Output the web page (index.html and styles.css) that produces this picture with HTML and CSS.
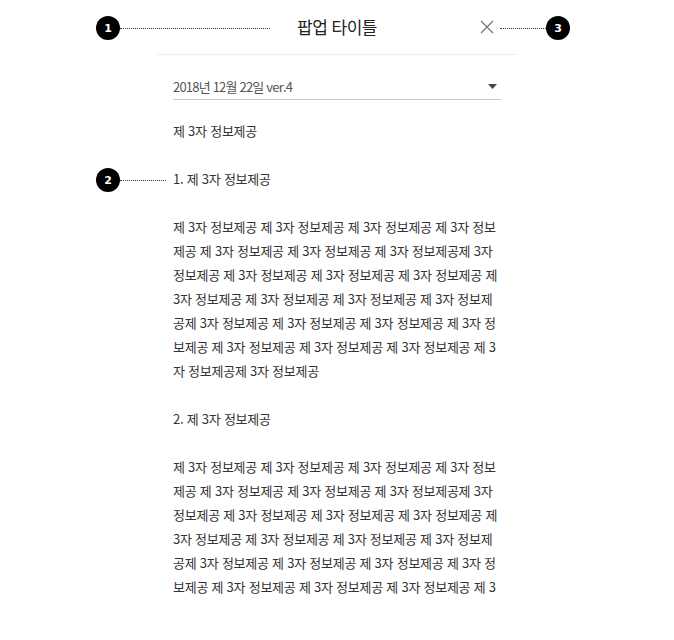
FILE: index.html
```html
<!DOCTYPE html>
<html lang="ko">
<head>
<meta charset="utf-8">
<title>팝업 타이틀</title>
<link rel="stylesheet" href="styles.css">
</head>
<body>
<div class="page">
  <div class="popup">
    <div class="popup-header">
      <span></span>
      <h1 class="popup-title">팝업 타이틀</h1>
      <button class="popup-close" type="button" aria-label="닫기">
        <svg width="14" height="14" viewBox="0 0 14 14"><path d="M1 1L13 13M13 1L1 13" stroke="#777" stroke-width="1.3" fill="none"/></svg>
      </button>
    </div>
    <div class="popup-body">
      <div class="select">
        <span class="select-value">2018년 12월 22일 ver.4</span>
        <svg class="select-arrow" width="9" height="5" viewBox="0 0 9 5"><path d="M0 0H9L4.5 5Z" fill="#444"/></svg>
      </div>
      <div class="content">
        <p>제 3자 정보제공</p>
        <p>1. 제 3자 정보제공</p>
        <p class="para">제 3자 정보제공 제 3자 정보제공 제 3자 정보제공 제 3자 정보제공 제 3자 정보제공 제 3자 정보제공 제 3자 정보제공제 3자 정보제공 제 3자 정보제공 제 3자 정보제공 제 3자 정보제공 제 3자 정보제공 제 3자 정보제공 제 3자 정보제공 제 3자 정보제공제 3자 정보제공 제 3자 정보제공 제 3자 정보제공 제 3자 정보제공 제 3자 정보제공 제 3자 정보제공 제 3자 정보제공 제 3자 정보제공제 3자 정보제공</p>
        <p>2. 제 3자 정보제공</p>
        <p class="para">제 3자 정보제공 제 3자 정보제공 제 3자 정보제공 제 3자 정보제공 제 3자 정보제공 제 3자 정보제공 제 3자 정보제공제 3자 정보제공 제 3자 정보제공 제 3자 정보제공 제 3자 정보제공 제 3자 정보제공 제 3자 정보제공 제 3자 정보제공 제 3자 정보제공제 3자 정보제공 제 3자 정보제공 제 3자 정보제공 제 3자 정보제공 제 3자 정보제공 제 3자 정보제공 제 3자 정보제공 제 3자 정보제공제 3자 정보제공</p>
      </div>
    </div>
  </div>

  <div class="marker marker-1"><span class="badge">1</span><span class="leader"></span></div>
  <div class="marker marker-2"><span class="badge">2</span><span class="leader"></span></div>
  <div class="marker marker-3"><span class="leader"></span><span class="badge">3</span></div>
</div>
</body>
</html>
```
FILE: styles.css
```css
html, body {
  margin: 0;
  padding: 0;
  background: #fff;
}
body {
  font-family: "Noto Sans CJK KR", "Noto Sans", sans-serif;
  color: #333;
}
.page {
  position: relative;
  width: 674px;
  height: 640px;
  overflow: hidden;
}
.popup {
  width: 360px;
  margin: 0 auto;
}
.popup-header {
  display: grid;
  grid-template-columns: 1fr auto 1fr;
  align-items: center;
  height: 54px;
  border-bottom: 1px solid #eee;
}
.popup-title {
  margin: 0;
  font-size: 17px;
  font-weight: 400;
  color: #222;
  letter-spacing: -0.5px;
  line-height: 24px;
  padding-bottom: 1px;
}
.popup-close {
  justify-self: end;
  margin-right: 23px;
  padding: 0;
  border: 0;
  background: none;
  width: 14px;
  height: 14px;
  display: flex;
}
.popup-body {
  box-sizing: border-box;
  height: 546px;
  overflow: hidden;
  padding: 19px 16px 0;
}
.select {
  display: flex;
  align-items: center;
  justify-content: space-between;
  height: 25px;
  border-bottom: 1px solid #ccc;
  padding-right: 4px;
}
.select-value {
  font-size: 13px;
  color: #555;
  letter-spacing: -0.8px;
  line-height: 24px;
}
.content {
  padding-top: 19px;
  font-size: 13px;
  line-height: 24px;
  color: #333;
  letter-spacing: -0.25px;
}
.content p {
  margin: 0 0 24px;
}
.para {
  word-break: break-all;
}
.marker {
  position: absolute;
  display: flex;
  align-items: center;
}
.badge {
  width: 24px;
  height: 24px;
  border-radius: 50%;
  background: #000;
  color: #fff;
  font-family: "DejaVu Sans", sans-serif;
  font-weight: 700;
  font-size: 11px;
  display: flex;
  align-items: center;
  justify-content: center;
}
.leader {
  height: 0;
  border-top: 1px dotted #333;
}
.marker-1 { left: 96px; top: 16px; }
.marker-1 .leader { width: 150px; }
.marker-2 { left: 96px; top: 168px; }
.marker-2 .leader { width: 46px; }
.marker-3 { left: 500px; top: 16px; }
.marker-3 .leader { width: 46px; }
```
